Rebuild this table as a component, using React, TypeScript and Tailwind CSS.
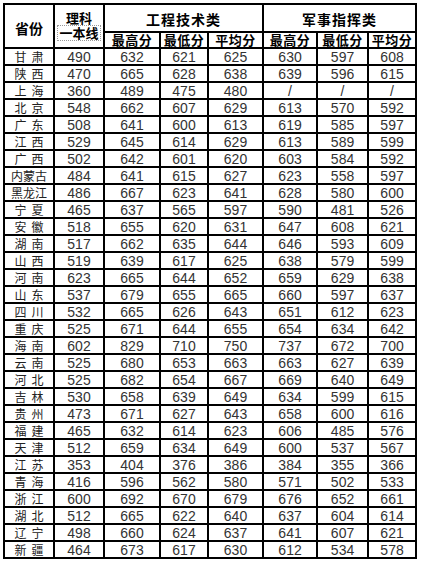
type Row = [string, string, string, string, string, string, string, string];

const rows: Row[] = [
  ["甘肃", "490", "632", "621", "625", "630", "597", "608"],
  ["陕西", "470", "665", "628", "638", "639", "596", "615"],
  ["上海", "360", "489", "475", "480", "/", "/", "/"],
  ["北京", "548", "662", "607", "629", "613", "570", "592"],
  ["广东", "508", "641", "600", "613", "619", "585", "597"],
  ["江西", "529", "645", "614", "629", "613", "589", "599"],
  ["广西", "502", "642", "601", "620", "603", "584", "592"],
  ["内蒙古", "484", "641", "615", "627", "623", "558", "597"],
  ["黑龙江", "486", "667", "623", "641", "628", "580", "600"],
  ["宁夏", "465", "637", "565", "597", "590", "481", "526"],
  ["安徽", "518", "655", "620", "631", "647", "608", "621"],
  ["湖南", "517", "662", "635", "644", "646", "593", "609"],
  ["山西", "519", "639", "617", "625", "638", "579", "599"],
  ["河南", "623", "665", "644", "652", "659", "629", "638"],
  ["山东", "537", "679", "655", "665", "660", "597", "637"],
  ["四川", "532", "665", "626", "643", "651", "612", "623"],
  ["重庆", "525", "671", "644", "655", "654", "634", "642"],
  ["海南", "602", "829", "710", "750", "737", "672", "700"],
  ["云南", "525", "680", "653", "663", "663", "627", "639"],
  ["河北", "525", "682", "654", "667", "669", "640", "649"],
  ["吉林", "530", "658", "639", "649", "634", "599", "615"],
  ["贵州", "473", "671", "627", "643", "658", "600", "616"],
  ["福建", "465", "632", "614", "623", "606", "485", "576"],
  ["天津", "512", "659", "634", "649", "600", "537", "567"],
  ["江苏", "353", "404", "376", "386", "384", "355", "366"],
  ["青海", "416", "596", "562", "580", "571", "502", "533"],
  ["浙江", "600", "692", "670", "679", "676", "652", "661"],
  ["湖北", "512", "665", "622", "640", "637", "604", "614"],
  ["辽宁", "498", "660", "624", "637", "641", "607", "621"],
  ["新疆", "464", "673", "617", "630", "612", "534", "578"],
];

const cjk = "font-['Noto_Sans_CJK_SC',sans-serif]";
const sub = ["最高分", "最低分", "平均分", "最高分", "最低分", "平均分"];

export default function App() {
  return (
    <div className="w-[421px] h-[564px] bg-white pt-[3px] pl-[3px] overflow-hidden">
      <table className="border-collapse table-fixed w-[414px] border-2 border-black text-[#333]">
        <colgroup>
          <col className="w-[50px]" />
          <col className="w-[50px]" />
          <col className="w-[56px]" />
          <col className="w-[48px]" />
          <col className="w-[55px]" />
          <col className="w-[54px]" />
          <col className="w-[51px]" />
          <col className="w-[48px]" />
        </colgroup>
        <thead className={`${cjk} font-bold text-black`}>
          <tr className="h-[28px]">
            <th rowSpan={2} className="border-2 border-black p-0 pt-[4px] text-[14px] leading-[14px]">
              省份
            </th>
            <th rowSpan={2} className="border-2 border-black p-0 text-[13px] leading-[14px]">
              <div>理科</div>
              <div className="mx-[2px] border border-dotted border-[#999]">一本线</div>
            </th>
            <th colSpan={3} className="border-2 border-black p-0 pt-[2px] text-[14px] leading-[14px] tracking-[1px]">
              工程技术类
            </th>
            <th colSpan={3} className="border-2 border-black p-0 pt-[2px] text-[14px] leading-[14px] tracking-[1px]">
              军事指挥类
            </th>
          </tr>
          <tr className="h-[16px]">
            {sub.map((s, i) => (
              <th key={i} className="border-2 border-black p-0 text-[13px] leading-[12px] tracking-[0.5px]">
                {s}
              </th>
            ))}
          </tr>
        </thead>
        <tbody>
          {rows.map((r) => (
            <tr key={r[0]} className="h-[17px]">
              <td className={`border-2 border-black p-0 text-center text-[12px] leading-[13px] text-[#222] ${cjk}`}>
                <span
                  className={`inline-flex justify-between ${r[0].length === 3 ? "w-[36px]" : "w-[29px]"}`}
                >
                  {r[0].split("").map((c, i) => (
                    <span key={i}>{c}</span>
                  ))}
                </span>
              </td>
              {r.slice(1).map((v, i) => (
                <td
                  key={i}
                  className="border-2 border-black p-0 text-center text-[14px] leading-[14px] font-['Liberation_Sans',Arial,sans-serif]"
                >
                  {v}
                </td>
              ))}
            </tr>
          ))}
        </tbody>
      </table>
    </div>
  );
}
